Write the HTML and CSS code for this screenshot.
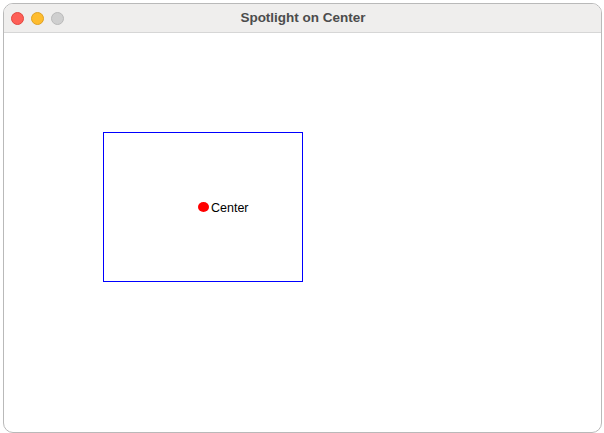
FILE: index.html
```html
<!DOCTYPE html>
<html>
<head>
<meta charset="utf-8">
<link rel="stylesheet" href="styles.css">
</head>
<body>
<div class="window">
  <div class="titlebar">
    <div class="lights">
      <span class="light red"></span>
      <span class="light yellow"></span>
      <span class="light grey"></span>
    </div>
    <div class="title">Spotlight on Center</div>
  </div>
  <div class="content">
    <div class="frame">
      <span class="dot"></span>
      <span class="label">Center</span>
    </div>
  </div>
</div>
</body>
</html>
```
FILE: styles.css
```css
html, body {
  margin: 0;
  padding: 0;
  background: #ffffff;
}
body {
  width: 604px;
  height: 433px;
  overflow: hidden;
  font-family: "Liberation Sans", Arial, sans-serif;
}
.window {
  margin: 3px 2px 0 3px;
  height: 430px;
  border: 1px solid #b9b9b9;
  border-radius: 10px;
  overflow: hidden;
  background: #ffffff;
  box-sizing: border-box;
}
.titlebar {
  position: relative;
  height: 29px;
  background: #efeeed;
  border-bottom: 1px solid #d6d6d6;
  box-sizing: border-box;
  display: flex;
  align-items: center;
}
.lights {
  display: flex;
  gap: 7px;
  padding-left: 7px;
  padding-top: 1px;
}
.light {
  width: 13px;
  height: 13px;
  border-radius: 50%;
  box-sizing: border-box;
}
.red { background: #fe5f57; border: 1px solid #e1463f; }
.yellow { background: #febc2e; border: 1px solid #dea123; }
.grey { background: #cfcfcf; border: 1px solid #b9b9b9; }
.title {
  position: absolute;
  left: 0;
  right: 0;
  top: 6px;
  text-align: center;
  font-weight: bold;
  font-size: 13.5px;
  color: #4c4c4c;
  padding-left: 1px;
}
.content {
  padding: 99px 0 0 99px;
}
.frame {
  position: relative;
  width: 200px;
  height: 150px;
  border: 1px solid #0000ff;
  box-sizing: border-box;
}
.dot {
  position: absolute;
  left: 94px;
  top: 69px;
  width: 11px;
  height: 10px;
  border-radius: 50%;
  background: #ff0000;
}
.label {
  position: absolute;
  left: 107px;
  top: 68px;
  font-size: 12.5px;
  color: #000000;
  line-height: 14px;
}
```
